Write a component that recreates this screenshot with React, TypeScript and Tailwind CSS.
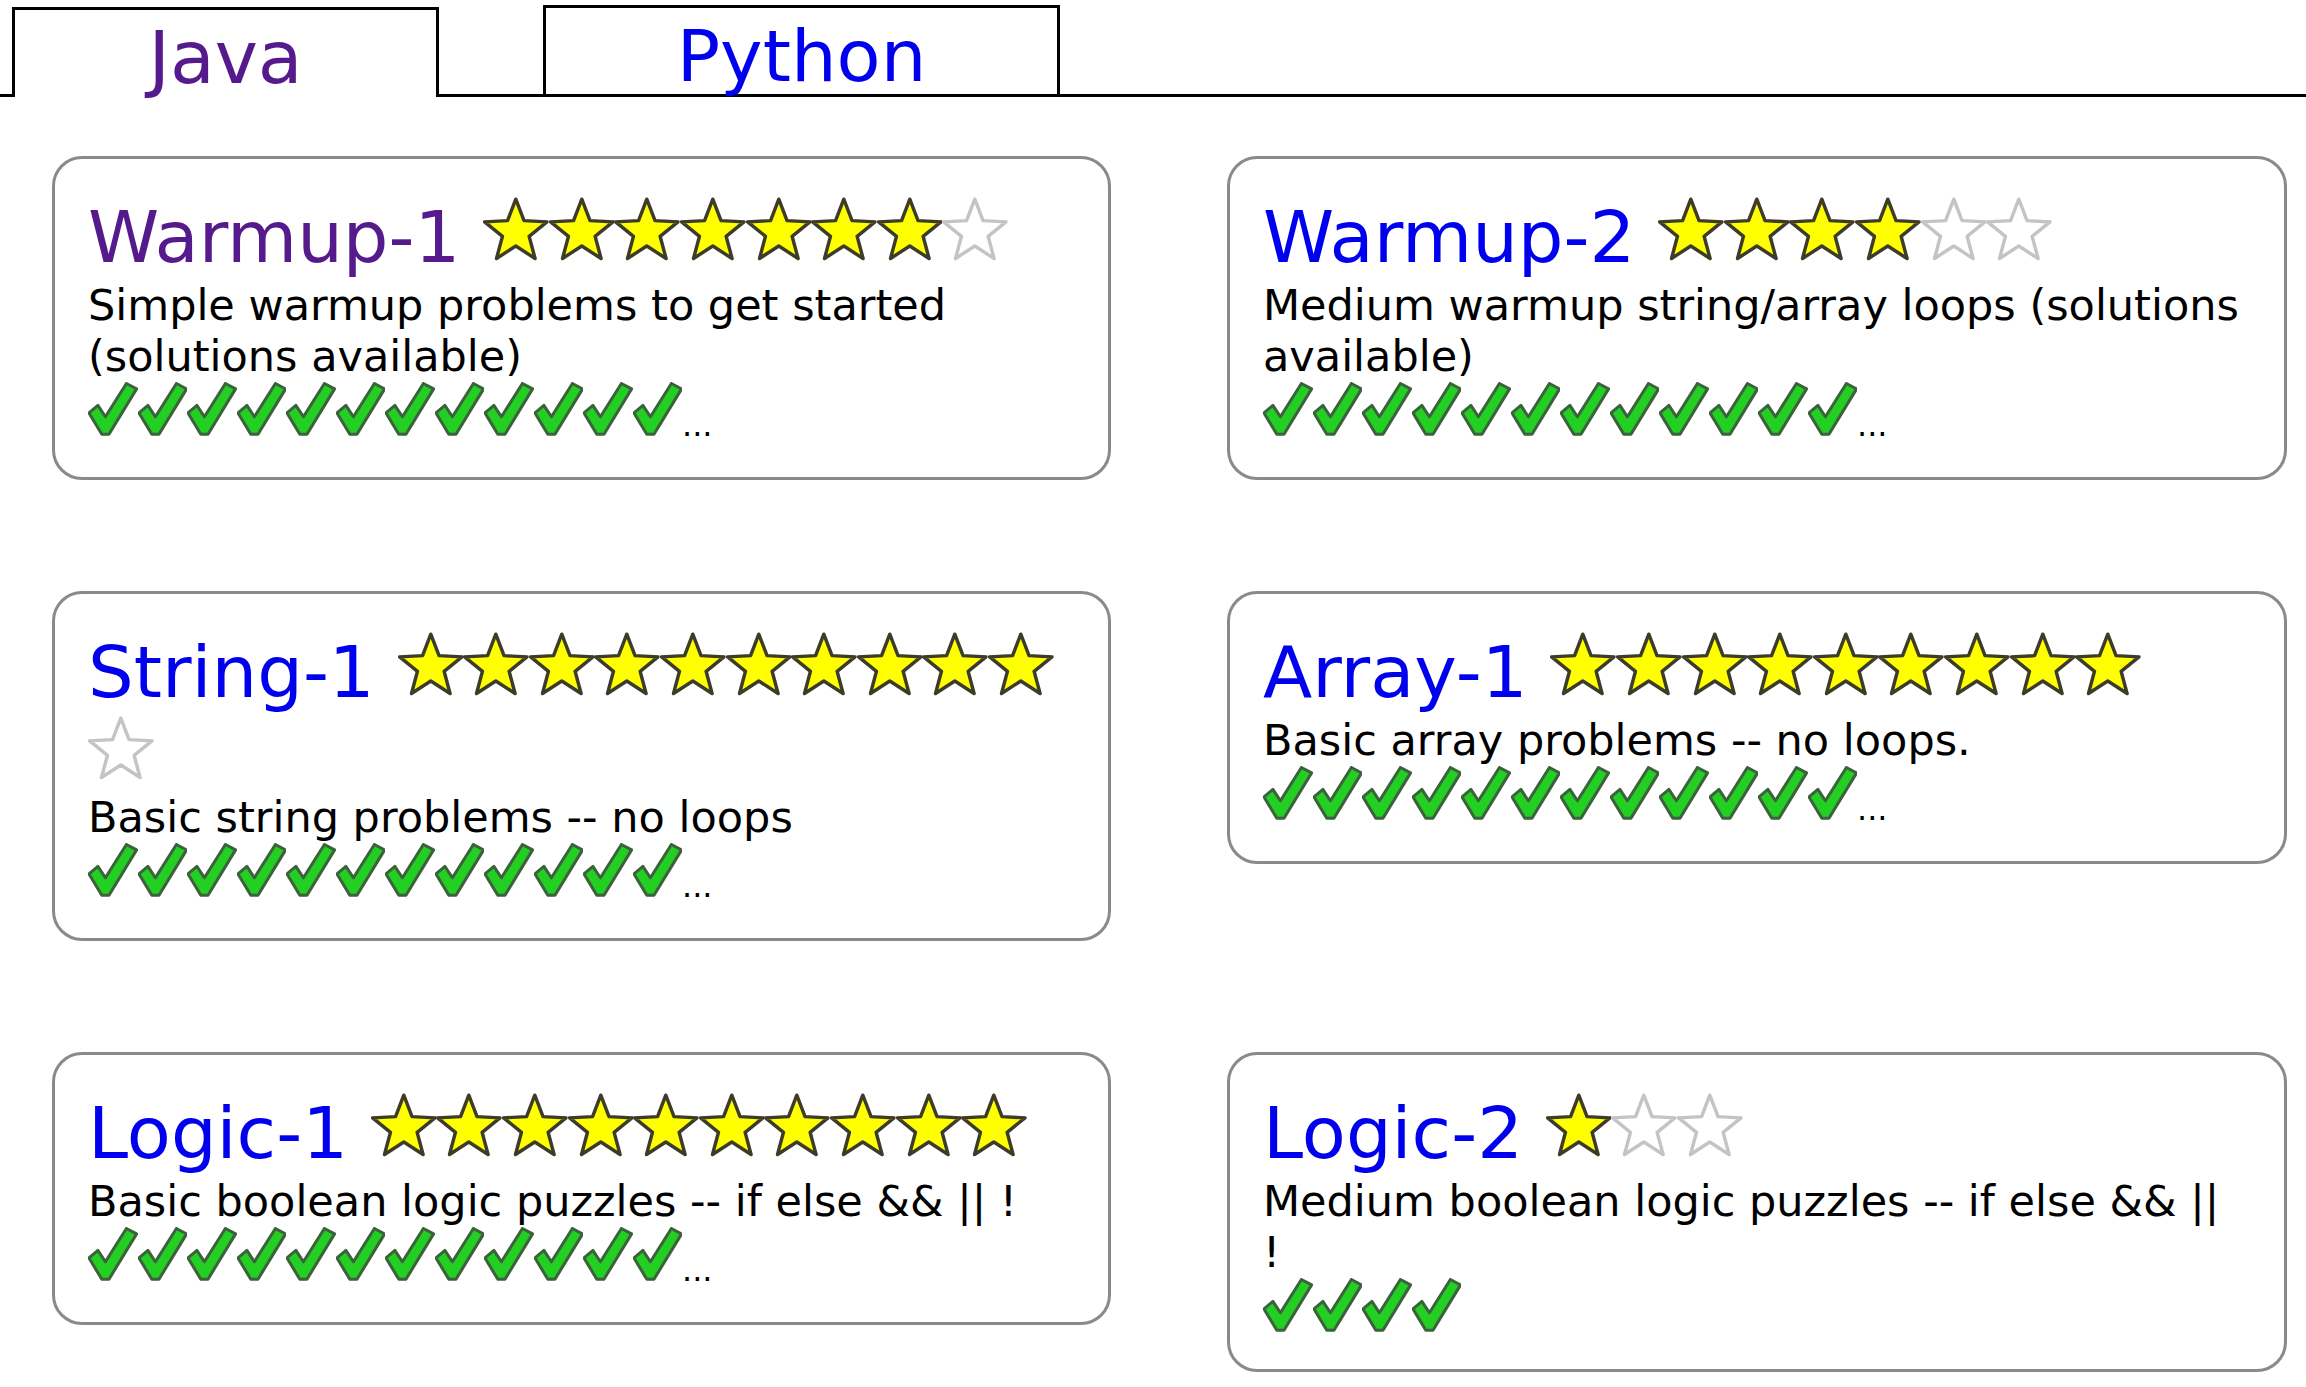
import React from "react";

type Topic = {
  name: string;
  visited?: boolean;
  stars: number;
  outOf: number;
  desc: React.ReactNode;
  checks: number;
  more: boolean;
};

const topics: Topic[] = [
  {
    name: "Warmup-1",
    visited: true,
    stars: 7,
    outOf: 8,
    desc: "Simple warmup problems to get started (solutions available)",
    checks: 12,
    more: true,
  },
  {
    name: "Warmup-2",
    stars: 4,
    outOf: 6,
    desc: "Medium warmup string/array loops (solutions available)",
    checks: 12,
    more: true,
  },
  {
    name: "String-1",
    stars: 10,
    outOf: 11,
    desc: "Basic string problems -- no loops",
    checks: 12,
    more: true,
  },
  {
    name: "Array-1",
    stars: 9,
    outOf: 9,
    desc: "Basic array problems -- no loops.",
    checks: 12,
    more: true,
  },
  {
    name: "Logic-1",
    stars: 10,
    outOf: 10,
    desc: "Basic boolean logic puzzles -- if else && || !",
    checks: 12,
    more: true,
  },
  {
    name: "Logic-2",
    stars: 1,
    outOf: 3,
    desc: (
      <>
        Medium boolean logic puzzles -- if else &amp;&amp; ||
        <br />!
      </>
    ),
    checks: 4,
    more: false,
  },
];

const STAR =
  "11,1 13.76,8.2 21.46,8.6 15.47,13.45 17.47,20.9 11,16.7 4.53,20.9 6.53,13.45 0.54,8.6 8.24,8.2";

const Star = ({ on }: { on: boolean }) => (
  <svg
    viewBox="0 0 22 22"
    className="inline-block align-baseline w-[65.6px] h-[66px]"
  >
    <line
      x1="0"
      y1="8.3"
      x2="22"
      y2="8.3"
      stroke={on ? "#e2e2c0" : "#efefef"}
      strokeWidth={0.6}
    />
    <polygon
      points={STAR}
      fill={on ? "#ffff00" : "#ffffff"}
      stroke={on ? "#3c3c28" : "#c4c4c4"}
      strokeWidth={1.15}
      strokeLinejoin="round"
    />
  </svg>
);

const Check = () => (
  <svg
    viewBox="0 0 33 36"
    className="inline-block align-baseline w-[49.5px] h-[54px]"
  >
    <polygon
      points="0.6,20.6 6.6,15.6 11.6,23.2 25.6,1 32.4,4.6 14,34.8 9.2,34.8"
      fill="#22cf22"
      stroke="#3b623b"
      strokeWidth={2}
      strokeLinejoin="round"
    />
  </svg>
);

const Card = ({ t }: { t: Topic }) => (
  <div className="border-[3px] border-[#8a8a8a] rounded-[30px] pl-[33px] pr-[33px] pt-[35px] pb-[26px] text-[43px] leading-[51px] text-black">
    <a
      className={`text-[72px] leading-[86px] ${
        t.visited ? "text-[#551A8B]" : "text-[#0000EE]"
      }`}
    >
      {t.name}{" "}
    </a>
    {Array.from({ length: t.outOf }).map((_, i) => (
      <Star key={i} on={i < t.stars} />
    ))}
    <br />
    {t.desc}
    <br />
    {Array.from({ length: t.checks }).map((_, i) => (
      <Check key={i} />
    ))}
    {t.more && <span className="text-[32px]">...</span>}
  </div>
);

export default function App() {
  return (
    <div className="min-h-screen bg-white font-['DejaVu_Sans',Verdana,sans-serif]">
      {/* tabs */}
      <div className="flex items-end h-[97px] border-b-[3px] border-black">
        <div className="relative ml-[12px] w-[427px] h-[90px] -mb-[3px] border-[3px] border-b-0 border-black bg-white pt-[12px] text-center text-[73px] leading-[72px]">
          <a className="text-[#551A8B]">Java</a>
        </div>
        <div className="ml-[104px] w-[517px] h-[89px] border-[3px] border-b-0 border-black pt-[12px] text-center text-[72px] leading-[72px]">
          <a className="text-[#0000EE]">Python</a>
        </div>
      </div>

      {/* topic cards */}
      <div className="grid grid-cols-[1059px_1060px] gap-x-[116px] gap-y-[111px] items-start pl-[52px] mt-[59px]">
        {topics.map((t) => (
          <Card key={t.name} t={t} />
        ))}
      </div>
    </div>
  );
}
